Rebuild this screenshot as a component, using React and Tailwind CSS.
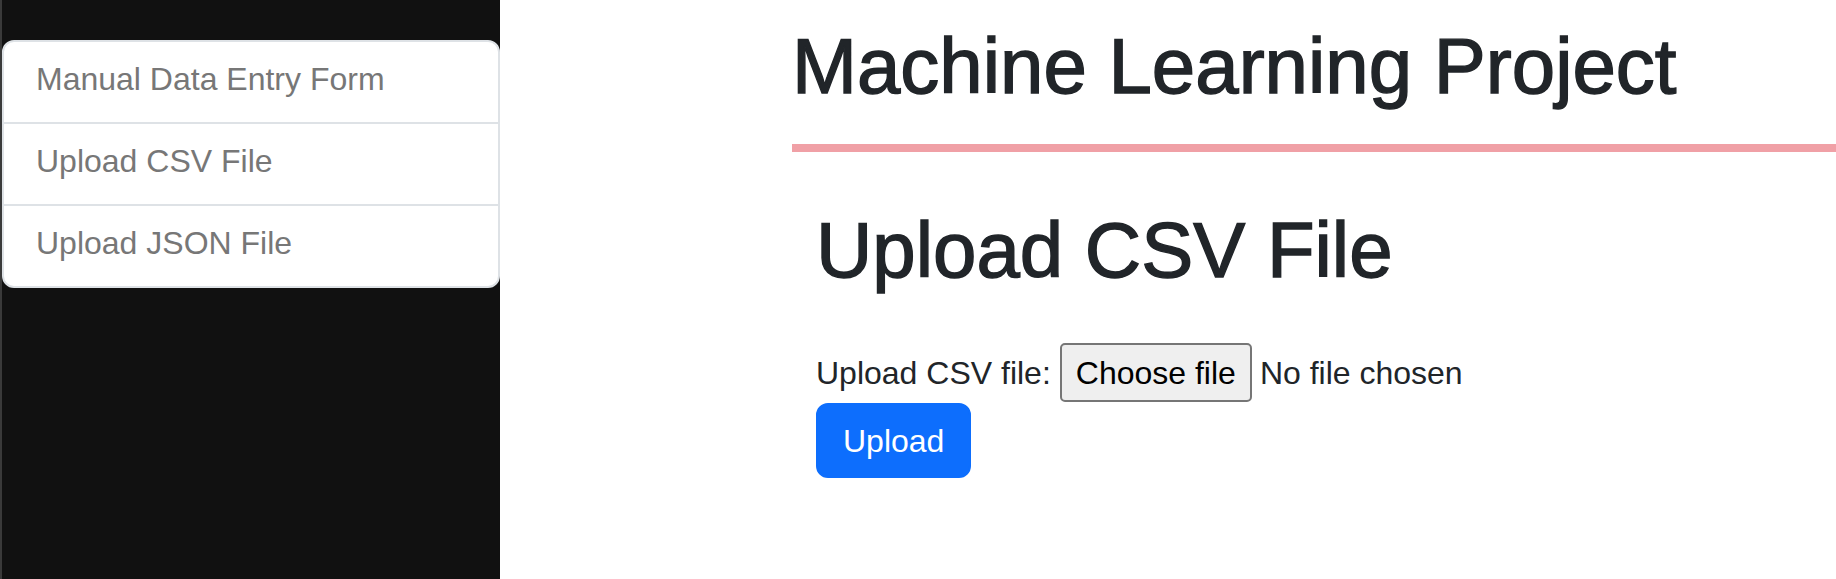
import React from 'react';

const links = ['Manual Data Entry Form', 'Upload CSV File', 'Upload JSON File'];

const App = () => {
  return (
    <div className="flex w-[1836px] min-h-[579px] overflow-hidden bg-white font-['Liberation_Sans',Arial,sans-serif] text-[#212529]">
      <aside className="w-[500px] shrink-0 border-l-2 border-[#3a3a3a] bg-[#111111] pt-[40px]">
        <ul className="overflow-hidden rounded-[12px] border-2 border-[#dee2e6] bg-white">
          {links.map((link, i) => (
            <li
              key={link}
              className={`px-[32px] pt-[13px] pb-[19px] text-[32px] leading-[48px] text-[#777777] ${
                i < links.length - 1 ? 'border-b-2 border-[#dee2e6]' : ''
              }`}
            >
              {link}
            </li>
          ))}
        </ul>
      </aside>

      <main className="min-w-0 flex-1 pl-[292px]">
        <h1 className="mt-[20px] whitespace-nowrap text-[78px] font-medium leading-[1.2] [-webkit-text-stroke:1.4px_#212529]">
          Machine Learning Project
        </h1>
        <div className="mt-[30px] h-[8px] bg-[#f0a0a6]" />

        <div className="pl-[24px]">
          <h1 className="mt-[52px] whitespace-nowrap text-[78px] font-medium leading-[1.2] [-webkit-text-stroke:1.4px_#212529]">
            Upload CSV File
          </h1>

          <form className="mt-[46px]">
            <div className="flex items-center text-[32px] leading-[48px]">
              <span>Upload CSV file:</span>
              <span className="ml-[9px] flex h-[59px] items-center rounded-[5px] border-2 border-[#767676] bg-[#efefef] px-[14px] text-black">
                Choose file
              </span>
              <span className="ml-[8px]">No file chosen</span>
            </div>
            <button
              type="button"
              className="mt-[1px] h-[75px] rounded-[12px] border-2 border-[#0d6efd] bg-[#0d6efd] px-[25px] text-[32px] leading-[48px] text-white"
            >
              Upload
            </button>
          </form>
        </div>
      </main>
    </div>
  );
};

export default App;
